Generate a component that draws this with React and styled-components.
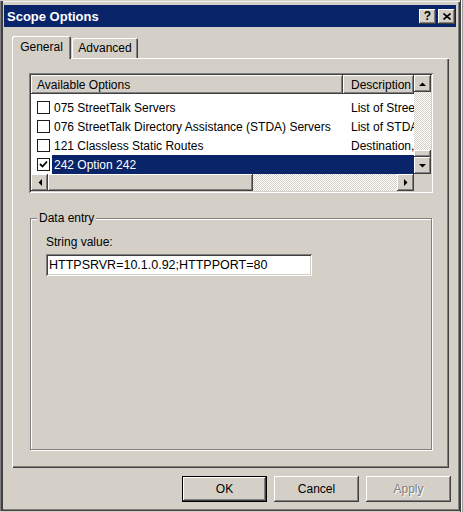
import React from 'react';
import styled, { createGlobalStyle, css } from 'styled-components';

const face = '#d4d0c8';
const navy = '#0a246a';

const Global = createGlobalStyle`
  html, body { margin: 0; padding: 0; background: ${face}; }
  body {
    font-family: "Liberation Sans", Arial, sans-serif;
    font-size: 12px;
    color: #000;
  }
`;

const raised = css`
  background: ${face};
  box-shadow: inset -1px -1px #404040, inset 1px 1px #fff,
    inset -2px -2px #808080, inset 2px 2px ${face};
`;

const sunken = css`
  box-shadow: inset 1px 1px #808080, inset -1px -1px #fff,
    inset 2px 2px #404040, inset -2px -2px ${face};
`;

const Screen = styled.div`
  display: flex;
  width: 464px;
  height: 512px;
  overflow: hidden;
  background: ${face};
`;

const Window = styled.div`
  flex: none;
  width: 460px;
  height: 510px;
  margin-top: 1px;
  box-sizing: border-box;
  padding: 4px;
  display: flex;
  flex-direction: column;
  background: ${face};
  box-shadow: inset 1px 0 #808080, inset 3px 0 #404040, inset 0 1px #f4f3f0,
    inset -1px -1px #404040, inset -2px -2px #808080;
`;

const Behind = styled.div`
  flex: 1;
  border-left: 1px solid #404040;
  box-shadow: inset 1px 0 #f4f3f0, inset 2px 0 #a0a0a0;
`;

const TitleBar = styled.div`
  flex: none;
  height: 22px;
  display: flex;
  align-items: center;
  gap: 2px;
  padding: 0 1px 0 3px;
  background: ${navy};
`;

const Title = styled.span`
  flex: 1;
  color: #fff;
  font-weight: bold;
  font-size: 13px;
`;

const CaptionButton = styled.div`
  ${raised};
  width: 17px;
  height: 15px;
  display: flex;
  align-items: center;
  justify-content: center;
  font-weight: bold;
  font-size: 12px;
  line-height: 1;
`;

const Body = styled.div`
  flex: 1;
  display: flex;
  flex-direction: column;
  padding: 9px 5px 5px 8px;
`;

const TabStrip = styled.div`
  flex: none;
  height: 22px;
  display: flex;
  align-items: flex-end;
  gap: 1px;
  position: relative;
  z-index: 1;
`;

const Tab = styled.div`
  width: ${(p) => p.$w}px;
  height: ${(p) => (p.$active ? 23 : 20)}px;
  margin-bottom: ${(p) => (p.$active ? -1 : 0)}px;
  box-sizing: border-box;
  padding-top: ${(p) => (p.$active ? 4 : 3)}px;
  text-align: center;
  background: ${face};
  border-radius: 2px 2px 0 0;
  box-shadow: inset 1px 1px #fff, inset -1px 0 #404040, inset -2px 0 #808080;
`;

const TabPanel = styled.div`
  flex: 1;
  margin-right: 2px;
  display: flex;
  flex-direction: column;
  padding: 15px 16px 18px 17px;
  box-shadow: inset 1px 1px #fff, inset -1px -1px #404040,
    inset -2px -2px #808080;
`;

const ListView = styled.div`
  flex: none;
  height: 120px;
  box-sizing: border-box;
  padding: 2px;
  background: #fff;
  ${sunken};
  display: grid;
  grid-template-columns: 1fr 17px;
  grid-template-rows: 1fr 17px;
`;

const ListContent = styled.div`
  overflow: hidden;
  display: flex;
  flex-direction: column;
`;

const Header = styled.div`
  flex: none;
  display: grid;
  grid-template-columns: 312px 1fr;
  height: 19px;
`;

const HeaderCell = styled.div`
  ${raised};
  box-shadow: inset -1px -1px #404040, inset 1px 1px #fff,
    inset -2px -2px #808080;
  padding: 3px 0 0 ${(p) => p.$pad}px;
  white-space: nowrap;
  overflow: hidden;
`;

const Rows = styled.div`
  padding-top: 4px;
`;

const Row = styled.div`
  display: flex;
  align-items: center;
  height: 19px;
`;

const Check = styled.div`
  flex: none;
  width: 11px;
  height: 11px;
  margin: 0 2px 0 6px;
  border: 1px solid #1c1c1c;
  background: #fff;
  display: flex;
  align-items: center;
  justify-content: center;
`;

const RowBody = styled.div`
  flex: 1;
  height: 19px;
  display: grid;
  grid-template-columns: 291px 1fr;
  align-items: center;
  white-space: nowrap;
  overflow: hidden;
  background: ${(p) => (p.$selected ? navy : 'transparent')};
  color: ${(p) => (p.$selected ? '#fff' : '#000')};
`;

const Cell = styled.span`
  padding-left: ${(p) => p.$pad}px;
  overflow: hidden;
`;

const ScrollV = styled.div`
  display: flex;
  flex-direction: column;
`;

const ScrollH = styled.div`
  display: flex;
`;

const ArrowButton = styled.div`
  ${raised};
  flex: none;
  width: 17px;
  height: 17px;
  display: flex;
  align-items: center;
  justify-content: center;
`;

const Track = styled.div`
  flex: 1;
  display: flex;
  flex-direction: ${(p) => (p.$vertical ? 'column' : 'row')};
  background: repeating-conic-gradient(#fff 0 25%, ${face} 0 50%) 0 0 / 2px 2px;
`;

const Thumb = styled.div`
  ${raised};
  flex: none;
  width: ${(p) => p.$w}px;
  height: ${(p) => p.$h}px;
  margin-top: ${(p) => (p.$end ? 'auto' : 0)};
`;

const Corner = styled.div`
  background: ${face};
`;

const GroupBox = styled.div`
  flex: 1;
  position: relative;
  margin: 25px 1px 0 1px;
  padding: 16px 16px 0 16px;
  border-top: 1px solid #808080;
  border-left: 1px solid #808080;
  border-right: 1px solid #808080;
  border-bottom: 1px solid #808080;
  box-shadow: inset 1px 1px #fff, 1px 1px #fff;
`;

const Legend = styled.span`
  position: absolute;
  top: -8px;
  left: 6px;
  padding: 0 2px;
  line-height: 15px;
  background: ${face};
`;

const FieldLabel = styled.div`
  line-height: 14px;
  margin-left: -1px;
`;

const TextBox = styled.div`
  width: 266px;
  height: 22px;
  margin: 5px 0 0 -1px;
  box-sizing: border-box;
  padding: 4px 3px 0;
  background: #fff;
  ${sunken};
  font-size: 12.5px;
  white-space: nowrap;
`;

const ButtonRow = styled.div`
  flex: none;
  display: flex;
  justify-content: flex-end;
  gap: 7px;
  margin-top: 8px;
`;

const PushButton = styled.div`
  ${raised};
  width: 85px;
  height: 26px;
  box-sizing: border-box;
  display: flex;
  align-items: center;
  justify-content: center;
  ${(p) =>
    p.$default &&
    css`
      box-shadow: inset 0 0 0 1px #000, inset -2px -2px #404040,
        inset 2px 2px #fff, inset -3px -3px #808080;
    `}
  ${(p) =>
    p.$disabled &&
    css`
      color: #808080;
      text-shadow: 1px 1px #fff;
    `}
`;

function Arrow({ dir }) {
  const horiz = dir === 'left' || dir === 'right';
  const points = {
    up: '0,4 7,4 3.5,0.5',
    down: '0,0 7,0 3.5,3.5',
    left: '4,0 4,7 0.5,3.5',
    right: '0,0 0,7 3.5,3.5',
  }[dir];
  return (
    <svg width={horiz ? 4 : 7} height={horiz ? 7 : 4} viewBox={horiz ? '0 0 4 7' : '0 0 7 4'}>
      <polygon points={points} fill="#000" />
    </svg>
  );
}

function CheckMark() {
  return (
    <svg width="9" height="9" viewBox="0 0 9 9">
      <polyline points="1,4 3.5,6.5 8,1.5" fill="none" stroke="#000" strokeWidth="1.8" />
    </svg>
  );
}

const options = [
  { label: '075 StreetTalk Servers', desc: 'List of StreetTalk Servers' },
  { label: '076 StreetTalk Directory Assistance (STDA) Servers', desc: 'List of STDA Servers' },
  { label: '121 Classless Static Routes', desc: 'Destination, mask and router' },
  { label: '242 Option 242', desc: '', checked: true, selected: true },
];

export default function App() {
  return (
    <Screen>
      <Global />
      <Window>
        <TitleBar>
          <Title>Scope Options</Title>
          <CaptionButton>?</CaptionButton>
          <CaptionButton>
            <svg width="8" height="7" viewBox="0 0 8 7">
              <path d="M0.5 0.5 L7.5 6.5 M7.5 0.5 L0.5 6.5" stroke="#000" strokeWidth="1.6" />
            </svg>
          </CaptionButton>
        </TitleBar>
        <Body>
          <TabStrip>
            <Tab $w={59} $active>General</Tab>
            <Tab $w={66}>Advanced</Tab>
          </TabStrip>
          <TabPanel>
            <ListView>
              <ListContent>
                <Header>
                  <HeaderCell $pad={6}>Available Options</HeaderCell>
                  <HeaderCell $pad={8}>Description</HeaderCell>
                </Header>
                <Rows>
                  {options.map((o) => (
                    <Row key={o.label}>
                      <Check>{o.checked && <CheckMark />}</Check>
                      <RowBody $selected={o.selected}>
                        <Cell $pad={2}>{o.label}</Cell>
                        <Cell $pad={8}>{o.desc}</Cell>
                      </RowBody>
                    </Row>
                  ))}
                </Rows>
              </ListContent>
              <ScrollV>
                <ArrowButton><Arrow dir="up" /></ArrowButton>
                <Track $vertical>
                  <Thumb $w={17} $h={7} $end />
                </Track>
                <ArrowButton><Arrow dir="down" /></ArrowButton>
              </ScrollV>
              <ScrollH>
                <ArrowButton><Arrow dir="left" /></ArrowButton>
                <Track>
                  <Thumb $w={205} $h={17} />
                </Track>
                <ArrowButton><Arrow dir="right" /></ArrowButton>
              </ScrollH>
              <Corner />
            </ListView>
            <GroupBox>
              <Legend>Data entry</Legend>
              <FieldLabel>String value:</FieldLabel>
              <TextBox>HTTPSRVR=10.1.0.92;HTTPPORT=80</TextBox>
            </GroupBox>
          </TabPanel>
          <ButtonRow>
            <PushButton $default>OK</PushButton>
            <PushButton>Cancel</PushButton>
            <PushButton $disabled>Apply</PushButton>
          </ButtonRow>
        </Body>
      </Window>
      <Behind />
    </Screen>
  );
}
